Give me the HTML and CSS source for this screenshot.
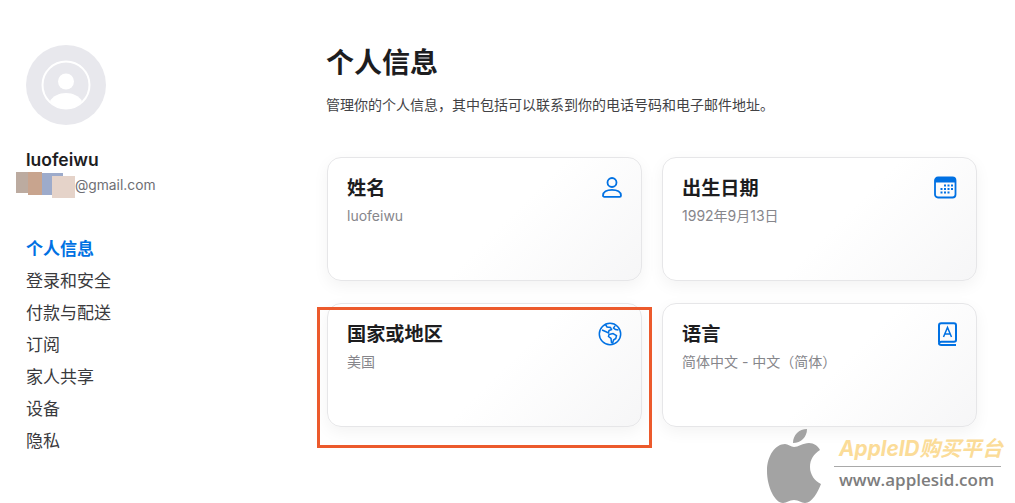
FILE: index.html
```html
<!DOCTYPE html>
<html lang="zh-CN">
<head>
<meta charset="utf-8">
<title>个人信息</title>
<link rel="stylesheet" href="styles.css">
</head>
<body>
<div class="page">
  <aside class="side">
    <svg class="avatar" viewBox="0 0 80 80" aria-hidden="true">
      <circle cx="40" cy="40" r="40" fill="#e8e8ed"/>
      <circle cx="40" cy="40" r="23.500" fill="none" stroke="#fff" stroke-width="2"/>
      <circle cx="40" cy="36.500" r="8" fill="#fff"/>
      <path d="M24 56c3-5 9-8 16-8s13 3 16 8c-4 5-10 8-16 8s-12-3-16-8z" fill="#fff"/>
    </svg>
    <div class="name">luofeiwu</div>
    <div class="email">@gmail.com
      <span class="patch p1"></span><span class="patch p2"></span><span class="patch p3"></span><span class="patch p4"></span>
    </div>
    <nav class="nav">
      <a class="on">个人信息</a>
      <a>登录和安全</a>
      <a>付款与配送</a>
      <a>订阅</a>
      <a>家人共享</a>
      <a>设备</a>
      <a>隐私</a>
    </nav>
  </aside>
  <main class="main">
    <h1>个人信息</h1>
    <p class="lead">管理你的个人信息，其中包括可以联系到你的电话号码和电子邮件地址。</p>
    <div class="cards">
      <section class="card">
        <div class="txt"><h2>姓名</h2><p>luofeiwu</p></div>
        <svg class="ico" viewBox="-2 0 24 24" aria-hidden="true"><circle cx="12" cy="6.500" r="4.500"/><path d="M3 19.500c0-3.500 3.800-5.700 9-5.700s9 2.200 9 5.700c0 .8-.5 1.300-1.300 1.300H4.300c-.8 0-1.300-.5-1.300-1.300z"/></svg>
      </section>
      <section class="card">
        <div class="txt"><h2>出生日期</h2><p>1992年9月13日</p></div>
        <svg class="ico" viewBox="0 0 24 24" aria-hidden="true"><rect x="2" y="1.500" width="20.500" height="20" rx="3"/><path class="fill" d="M2 6.500V4.500c0-1.700 1.300-3 3-3h14.500c1.700 0 3 1.300 3 3v2z"/><g class="dots"><rect x="11" y="8.500" width="2" height="2"/><rect x="14.500" y="8.500" width="2" height="2"/><rect x="18" y="8.500" width="2" height="2"/><rect x="7.500" y="12" width="2" height="2"/><rect x="11" y="12" width="2" height="2"/><rect x="14.500" y="12" width="2" height="2"/><rect x="18" y="12" width="2" height="2"/><rect x="7.500" y="15.500" width="2" height="2"/><rect x="11" y="15.500" width="2" height="2"/><rect x="14.500" y="15.500" width="2" height="2"/></g></svg>
      </section>
      <section class="card">
        <div class="txt"><h2>国家或地区</h2><p>美国</p></div>
        <svg class="ico globe" viewBox="0 0 24 24" aria-hidden="true"><circle cx="12" cy="12" r="10.700"/><path d="M7.500 2.500l1.500 2.500 3.500.5 1 2-2.500 1-.5 2.500-3-1.500-3.500-1.500"/><path d="M11 12.500l4-1 3.500 2-.7 3-2.300 1.500-.8 3-1.200-.5-.5-4-2.500-2z"/><path d="M17 3.800l-1.500 2.200 2 1.500 3 .5"/></svg>
      </section>
      <section class="card">
        <div class="txt"><h2>语言</h2><p>简体中文 - 中文（简体）</p></div>
        <svg class="ico book" viewBox="0 0 24 24" aria-hidden="true"><path d="M6 20.500V3.500C6 2.200 7 1.300 8.200 1.300H21c1.200 0 2 .9 2 2V18c0 1-.8 1.700-2 1.700H8.500c-1.500 0-2.500.9-2.500 1.900s1 1.400 2.500 1.400H23"/><path class="thin" d="M10.500 15l4-9.500 4 9.500M11.800 12h5.400"/></svg>
      </section>
    </div>
  </main>
</div>
<div class="frame"></div>
<div class="mark">
  <svg class="apple" viewBox="0 0 55 74" aria-hidden="true"><path d="M27 18C31 18 36 14 42 14C47 14 51 17 53 21C47 25 43 30 43 38C43 46 48 52 54 55C51 63 45 74 38 74C34 74 32 71 27 71C22 71 20 74 16 74C8 74 0 58 0 42C0 26 9 15 18 15C21 15 24 18 27 18Z" fill="#a3a3a3"/><path d="M26 14C26 6 32 0 40 0C40 8 34 14 26 14Z" fill="#a3a3a3"/></svg>
  <div class="mark-txt">
    <div class="brand">AppleID购买平台</div>
    <div class="site">www.applesid.com</div>
  </div>
</div>
</body>
</html>
```
FILE: styles.css
```css
* { box-sizing: border-box; }
html, body { margin: 0; padding: 0; }
body {
  width: 1015px;
  height: 503px;
  overflow: hidden;
  position: relative;
  background: #fff;
  font-family: Inter, "Noto Sans CJK SC", sans-serif;
  color: #1d1d1f;
}
.page { display: flex; padding: 45px 38px 0 26px; }
.side { width: 300px; flex: none; }
.avatar { display: block; width: 80px; height: 80px; }
.name { margin-top: 24px; font-size: 17.500px; font-weight: 600; line-height: 22px; }
.email {
  position: relative;
  margin-top: 5px;
  padding-left: 49px;
  font-size: 13.800px;
  line-height: 18px;
  color: #6e6e73;
}
.patch { position: absolute; }
.p1 { left: -10px; top: -4px; width: 24px; height: 21px; background: #bcaba0; }
.p2 { left: 2px; top: -4px; width: 14px; height: 23px; background: #c8a48e; }
.p3 { left: 16px; top: -3px; width: 21px; height: 22px; background: #9dabcb; }
.p4 { left: 26px; top: 0; width: 23px; height: 22px; background: #e5d3c9; }
.nav { display: flex; flex-direction: column; margin-top: 39px; }
.nav a { font-size: 17px; line-height: 32px; color: #3a3a3d; }
.nav a.on { color: #0071e3; font-weight: 700; }
.main { flex: 1; min-width: 0; }
h1 { margin: 0; font-size: 28px; line-height: 36px; font-weight: 700; }
.lead { margin: 15px 0 0; font-size: 14px; line-height: 18px; color: #424245; }
.cards {
  display: grid;
  grid-template-columns: 315px 315px;
  grid-auto-rows: 124px;
  gap: 22px 20px;
  margin: 43px 0 0 1px;
}
.card {
  display: flex;
  justify-content: space-between;
  align-items: flex-start;
  padding: 18px 19px;
  border: 1px solid #e6e6e8;
  border-radius: 14px;
  background: linear-gradient(135deg, #fff 55%, #f6f6f7 100%);
  box-shadow: 0 5px 16px rgba(0, 0, 0, .05);
}
.txt { margin-top: -1px; }
.card h2 { margin: 0; font-size: 19.200px; line-height: 26px; font-weight: 700; }
.card p { margin: 6px 0 0; font-size: 14px; line-height: 18px; color: #86868b; }
.ico {
  width: 24px;
  height: 24px;
  flex: none;
  fill: none;
  stroke: #0071e3;
  stroke-width: 1.800;
  overflow: visible;
}
.ico .fill, .ico .dots { fill: #0071e3; stroke: none; }
.globe { stroke-width: 1.500; }
.book { stroke-width: 2; }
.book .thin { stroke-width: 1.500; }
.frame {
  position: absolute;
  left: 317px;
  top: 307px;
  width: 335px;
  height: 141px;
  border: 3px solid #ec5a2c;
}
.mark {
  position: absolute;
  left: 767px;
  top: 429px;
  display: flex;
  gap: 12px;
}
.apple { display: block; width: 55px; height: 74px; flex: none; }
.mark-txt { width: 167px; margin-top: 7px; }
.brand {
  padding-left: 5px;
  padding-bottom: 5px;
  font-size: 20.800px;
  line-height: 25px;
  font-style: italic;
  font-weight: 700;
  color: #fbdc98;
  white-space: nowrap;
  border-bottom: 1px solid #a9a9a9;
}
.site {
  padding-left: 5px;
  margin-top: 2px;
  font-family: "Open Sans", sans-serif;
  font-size: 17px;
  line-height: 22px;
  font-weight: 600;
  color: #7d7d7d;
  white-space: nowrap;
}
```
